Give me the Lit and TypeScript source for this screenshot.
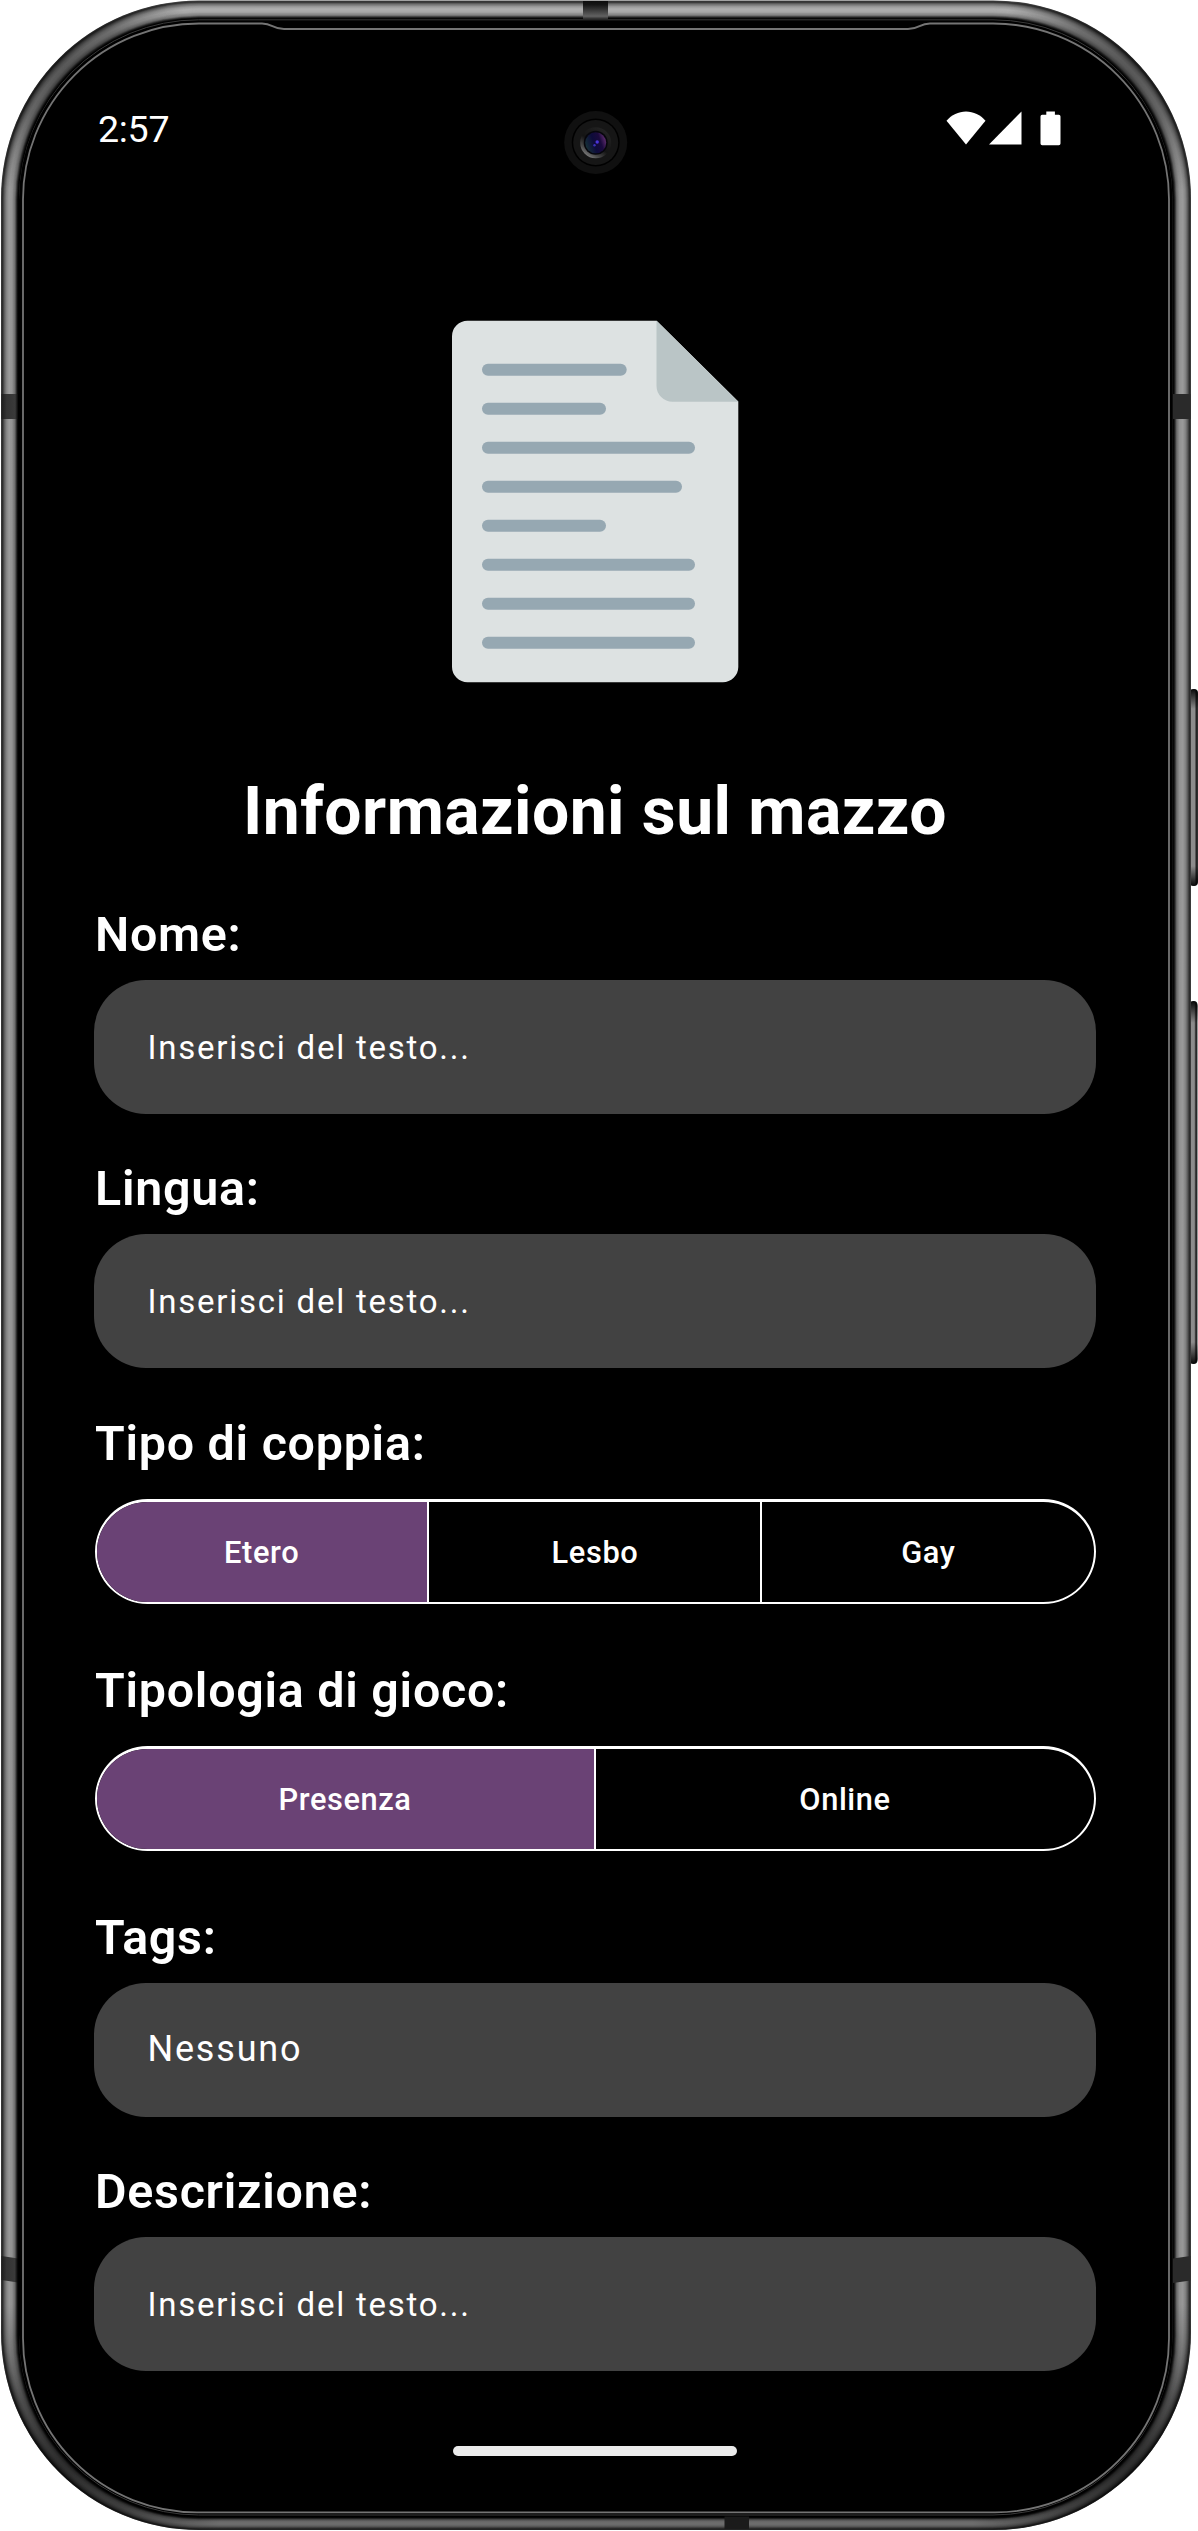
import { LitElement, html, svg, css } from "lit";
import { customElement, property, state } from "lit/decorators.js";

/** Brightness profile of the metal rim, from the outer edge (0) to the glass (1). */
const RIM: [number, number][] = [
  [0, 70], [0.07, 44], [0.16, 98], [0.3, 152], [0.45, 176], [0.62, 168], [0.78, 124], [0.86, 62], [0.93, 12], [1, 0],
];

const rimShade = (t: number): number => {
  for (let i = 1; i < RIM.length; i++) {
    const [t1, v1] = RIM[i];
    const [t0, v0] = RIM[i - 1];
    if (t <= t1) return Math.round(v0 + ((v1 - v0) * (t - t0)) / (t1 - t0));
  }
  return 0;
};

const mix = (a: number, b: number, t: number) => a + (b - a) * t;

@customElement("phone-frame")
export class PhoneFrame extends LitElement {
  static styles = css`
    :host { display: block; }
    svg { display: block; width: 1198px; height: 2531px; }
  `;

  private rim() {
    const steps = 36;
    return Array.from({ length: steps + 1 }, (_, i) => {
      const t = i / steps;
      const v = rimShade(t);
      const l = mix(1, 18.5, t), r = mix(1191, 1173, t);
      const top = mix(0.5, 19, t), bottom = mix(2530, 2517, t);
      return svg`<rect x=${l} y=${top} width=${r - l} height=${bottom - top} rx=${mix(198, 181, t)} fill="rgb(${v},${v},${v})"/>`;
    });
  }

  render() {
    return html`
      <svg viewBox="0 0 1198 2531" aria-hidden="true">
        <defs>
          <clipPath id="body"><rect x="1" y="0.5" width="1190" height="2529.5" rx="198"/></clipPath>
          <linearGradient id="fall" x1="0" y1="0" x2="0" y2="1">
            <stop offset="0" stop-color="#000" stop-opacity="0"/>
            <stop offset="0.07" stop-color="#000" stop-opacity="0.12"/>
            <stop offset="0.93" stop-color="#000" stop-opacity="0.14"/>
            <stop offset="1" stop-color="#000" stop-opacity="0.38"/>
          </linearGradient>
          <radialGradient id="dim">
            <stop offset="0" stop-color="#000" stop-opacity="0.5"/>
            <stop offset="0.45" stop-color="#000" stop-opacity="0.36"/>
            <stop offset="1" stop-color="#000" stop-opacity="0"/>
          </radialGradient>
          <radialGradient id="dimmer">
            <stop offset="0" stop-color="#000" stop-opacity="0.66"/>
            <stop offset="0.45" stop-color="#000" stop-opacity="0.45"/>
            <stop offset="1" stop-color="#000" stop-opacity="0"/>
          </radialGradient>
          <linearGradient id="key" x1="0" x2="1" y1="0" y2="0">
            <stop offset="0" stop-color="#1a1a1a"/>
            <stop offset="0.4" stop-color="#8c8c8c"/>
            <stop offset="0.72" stop-color="#8c8c8c"/>
            <stop offset="0.86" stop-color="#222"/>
            <stop offset="1" stop-color="#333"/>
          </linearGradient>
          <linearGradient id="keyfade" x1="0" x2="0" y1="0" y2="1">
            <stop offset="0" stop-color="#000" stop-opacity="0.95"/>
            <stop offset="1" stop-color="#000" stop-opacity="0"/>
          </linearGradient>
          <linearGradient id="bandTop" x1="0" x2="0" y1="0" y2="1">
            <stop offset="0" stop-color="#0c0c0c"/><stop offset="0.2" stop-color="#161616"/><stop offset="0.8" stop-color="#626262"/><stop offset="1" stop-color="#161616"/>
          </linearGradient>
          <linearGradient id="bandSide" x1="0" x2="1" y1="0" y2="0">
            <stop offset="0" stop-color="#1c1c1c"/><stop offset="0.3" stop-color="#333"/><stop offset="0.8" stop-color="#3a3a3a"/><stop offset="1" stop-color="#000"/>
          </linearGradient>
          <linearGradient id="ring" x1="0.15" y1="0.95" x2="0.75" y2="0.1">
            <stop offset="0" stop-color="#8a8a8a"/><stop offset="0.22" stop-color="#4a4a4a"/><stop offset="0.5" stop-color="#141414"/><stop offset="1" stop-color="#222"/>
          </linearGradient>
          <linearGradient id="lens" x1="0" y1="0.6" x2="1" y2="0.25">
            <stop offset="0" stop-color="#163037"/><stop offset="0.4" stop-color="#0d0b3a"/><stop offset="0.7" stop-color="#1a0a3c"/><stop offset="1" stop-color="#6a3276"/>
          </linearGradient>
        </defs>

        <rect x="1186" y="689" width="12" height="197" rx="5" fill="url(#key)"/>
        <rect x="1190" y="689" width="8" height="20" rx="4" fill="url(#keyfade)"/>
        <rect x="1190" y="866" width="8" height="20" rx="4" fill="url(#keyfade)" transform="rotate(180 1194 876)"/>
        <rect x="1186" y="1001" width="11.5" height="363" rx="5" fill="url(#key)"/>
        <rect x="1190" y="1001" width="7.5" height="22" rx="4" fill="url(#keyfade)"/>
        <rect x="1190" y="1342" width="7.5" height="22" rx="4" fill="url(#keyfade)" transform="rotate(180 1193.75 1353)"/>

        ${this.rim()}
        <g clip-path="url(#body)">
          <path fill="url(#fall)" d="M0 0H1198V2531H0z"/>
          <circle cx="52" cy="56" r="140" fill="url(#dim)"/>
          <circle cx="1140" cy="56" r="140" fill="url(#dim)"/>
          <circle cx="52" cy="2474" r="175" fill="url(#dimmer)"/>
          <circle cx="1140" cy="2474" r="175" fill="url(#dimmer)"/>
          <rect x="583" y="1" width="25" height="19" fill="url(#bandTop)"/>
          <rect x="724.5" y="2515" width="24.5" height="14" fill="#1b1b1b"/>
          <rect x="1.5" y="394" width="17" height="25" fill="url(#bandSide)"/>
          <rect x="1173" y="394" width="17.5" height="25" fill="#2a2a2a"/>
          <path d="M1.5 2256L18 2258.5V2282.5L1.5 2280z" fill="url(#bandSide)"/>
          <path d="M1173 2258.5L1190.500 2256V2280.500L1173 2283z" fill="#2a2a2a"/>
        </g>
        <rect x="18.5" y="19" width="1154.5" height="2497.5" rx="181" fill="#000"/>
        <rect x="19.5" y="19.8" width="1152.5" height="2495.2" rx="179" fill="none" stroke="#3a3a3a" stroke-width="1"/>
        <rect x="19" y="21" width="1153.5" height="2493" rx="179" fill="#000"/>
        <path d="M199 23.5H262C273 23.5 272 29 284 29H908C920 29 919 23.5 930 23.5H993A176 176 0 0 1 1169 199.500V2338A174 174 0 0 1 995 2512.300H197A174 174 0 0 1 23 2338V199.500A176 176 0 0 1 199 23.500"
          fill="#000" stroke="#747474" stroke-width="1.8"/>

        <circle cx="595.7" cy="142.500" r="31.500" fill="#101010"/>
        <circle cx="595.7" cy="142.500" r="24" fill="#000"/>
        <circle cx="595.7" cy="142.500" r="22.500" fill="#161616"/>
        <circle cx="595.7" cy="142.800" r="15.500" fill="url(#ring)"/>
        <circle cx="595.7" cy="142.800" r="12" fill="#06060c"/>
        <circle cx="595.7" cy="142.800" r="10.500" fill="url(#lens)"/>
        <circle cx="597.2" cy="142" r="1.700" fill="#4a35d8"/>
        <circle cx="594.5" cy="145.200" r="1.200" fill="#3a2fb4"/>
      </svg>`;
  }
}

@customElement("status-bar")
export class StatusBar extends LitElement {
  static styles = css`
    :host { display: flex; justify-content: space-between; align-items: flex-start; color: #fff; }
    .time { padding-top: 1px; font: 400 37.6px/44px Roboto, "Liberation Sans", sans-serif; letter-spacing: -0.3px; }
    svg { display: block; width: 115px; height: 35px; margin-top: 5px; }
  `;
  render() {
    return html`
      <span class="time">2:57</span>
      <svg viewBox="945.5 111.5 115 35" fill="#fff" aria-hidden="true">
        <path d="M965.5 145L946 121.200C951 115.500 958 112 965.500 112S980 115.500 985 121.200z"/>
        <path d="M1021 112V145H988.500z"/>
        <path d="M1045.8 112H1054.400V115.300H1058.300Q1060 115.300 1060 117V144Q1060 145.800 1058.300 145.800H1041.700Q1040 145.800 1040 144V117Q1040 115.300 1041.700 115.300H1045.800z"/>
      </svg>`;
  }
}

@customElement("text-box")
export class TextBox extends LitElement {
  @property() value = "";
  @property() placeholder = "";
  static styles = css`
    :host { display: flex; align-items: center; height: 134px; box-sizing: border-box; padding: 0 53.5px; border-radius: 52px; background: #424242; color: #fff; font-family: Roboto, "Liberation Sans", sans-serif; }
    .hint { padding-top: 1px; font-size: 33px; letter-spacing: 1.76px; }
    .value { padding-bottom: 2px; font-size: 36px; letter-spacing: 1.8px; }
  `;
  render() {
    return this.value
      ? html`<span class="value">${this.value}</span>`
      : html`<span class="hint">${this.placeholder}</span>`;
  }
}

@customElement("choice-bar")
export class ChoiceBar extends LitElement {
  @property({ attribute: false }) options: string[] = [];
  @state() private selected = 0;
  static styles = css`
    :host { display: flex; box-sizing: border-box; height: 105px; margin: 0 0.5px; border: 2px solid #fff; border-top-width: 3px; border-radius: 53px; overflow: hidden; }
    button { all: unset; box-sizing: border-box; flex: 1 1 0; display: flex; align-items: center; justify-content: center; padding-top: 1px; color: #fff; font: 500 30.8px Roboto, "Liberation Sans", sans-serif; letter-spacing: 0.6px; }
    button + button { border-left: 2px solid #fff; padding-left: 1px; }
    .on { background: #6a4275; }
  `;
  render() {
    return this.options.map(
      (o, i) => html`<button class=${i === this.selected ? "on" : ""} @click=${() => (this.selected = i)}>${o}</button>`,
    );
  }
}

@customElement("app-root")
export class AppRoot extends LitElement {
  static styles = css`
    :host { display: block; width: 1198px; height: 2531px; background: #fff; overflow: hidden; }
    .phone { position: relative; height: 2531px; }
    phone-frame { position: absolute; inset: 0; }
    .screen { position: relative; display: flex; flex-direction: column; width: 1002px; height: 2531px; box-sizing: border-box; padding-top: 106px; margin-left: 94px; font-family: Roboto, "Liberation Sans", sans-serif; color: #fff; }
    status-bar { height: 44px; padding: 0 35.5px 0 4px; }
    .doc { display: block; width: 288px; height: 363px; margin: 170px auto 0; }
    h1 { margin: 89px 0 0; font-size: 66px; line-height: 80px; font-weight: 700; letter-spacing: 0.44px; text-align: center; }
    .form { display: flex; flex-direction: column; padding-top: 55px; gap: 47px; }
    .field { display: flex; flex-direction: column; gap: 17px; }
    .choice { gap: 27px; padding-top: 1px; margin-bottom: 11px; }
    .choice + .choice { margin-bottom: 12px; }
    .label { padding-left: 1px; font-size: 48.4px; line-height: 56px; font-weight: 600; letter-spacing: 0.73px; }
    .home { width: 284px; height: 10px; margin: 75px auto 0; border-radius: 5px; background: #ebebeb; }
  `;

  private rows = [
    { y: 363.7, x2: 626.7 }, { y: 402.7, x2: 606 }, { y: 441.7, x2: 695 }, { y: 480.7, x2: 682 },
    { y: 519.7, x2: 606 }, { y: 558.7, x2: 695 }, { y: 597.7, x2: 695 }, { y: 636.7, x2: 695 },
  ];

  private text(label: string, value = "") {
    return html`<div class="field">
      <div class="label">${label}</div>
      <text-box .value=${value} placeholder="Inserisci del testo..."></text-box>
    </div>`;
  }

  private choice(label: string, options: string[]) {
    return html`<div class="field choice">
      <div class="label">${label}</div>
      <choice-bar .options=${options}></choice-bar>
    </div>`;
  }

  render() {
    return html`
      <div class="phone">
        <phone-frame></phone-frame>
        <div class="screen">
          <status-bar></status-bar>
          <svg class="doc" viewBox="451 320 288 363" aria-hidden="true">
            <path fill="#dde2e2" d="M467.5 320.800H656.700L738.300 401.500V667A15.500 15.500 0 0 1 722.800 682.300H467.500A15.500 15.500 0 0 1 452 667V336.300A15.500 15.500 0 0 1 467.500 320.800z"/>
            <path fill="#bac5c6" d="M656.5 320.800L738.300 401.700H672.500A16 16 0 0 1 656.500 385.700z"/>
            ${this.rows.map((r) => svg`<rect x="482" y=${r.y} width=${r.x2 - 482} height="12" rx="6" fill="#96a8b2"/>`)}
          </svg>
          <h1>Informazioni sul mazzo</h1>
          <div class="form">
            ${this.text("Nome:")}
            ${this.text("Lingua:")}
            ${this.choice("Tipo di coppia:", ["Etero", "Lesbo", "Gay"])}
            ${this.choice("Tipologia di gioco:", ["Presenza", "Online"])}
            ${this.text("Tags:", "Nessuno")}
            ${this.text("Descrizione:")}
          </div>
          <div class="home"></div>
        </div>
      </div>`;
  }
}
